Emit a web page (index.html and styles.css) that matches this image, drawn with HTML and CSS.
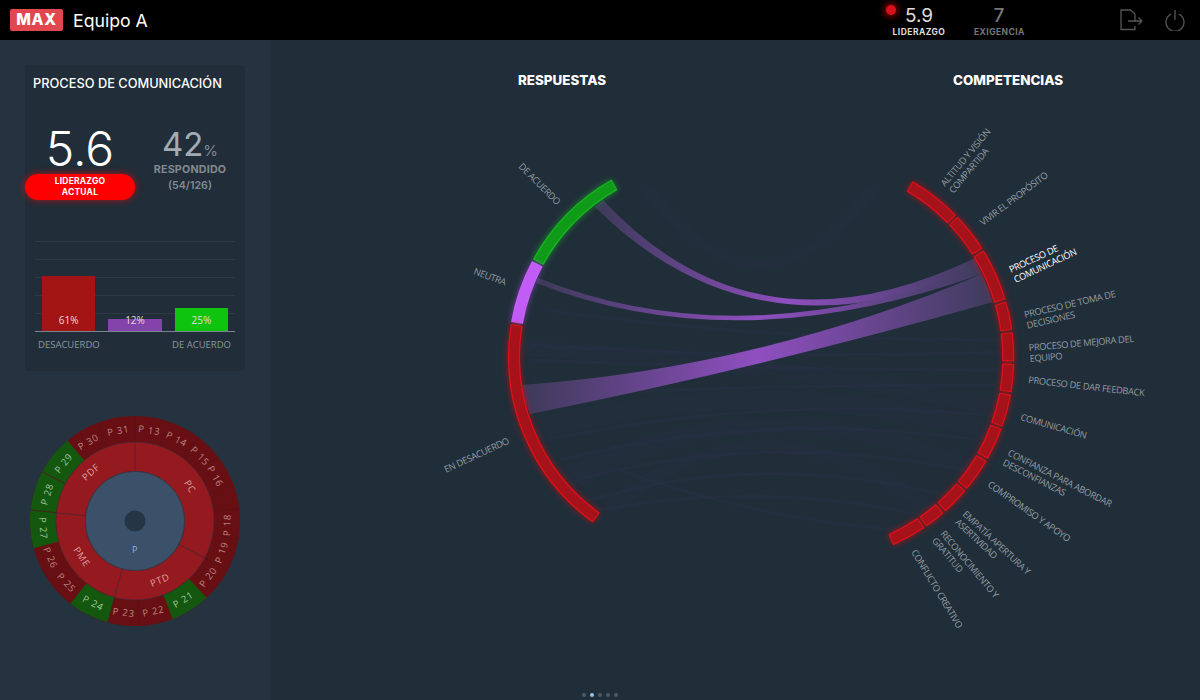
FILE: index.html
```html
<!DOCTYPE html>
<html lang="es">
<head>
<meta charset="utf-8">
<title>Equipo A</title>
<link rel="stylesheet" href="styles.css">
</head>
<body>
<header class="topbar">
  <div class="brand"><span class="logo">MAX</span><span class="team">Equipo A</span></div>
  <div class="metrics">
    <div class="metric metric-lead">
      <div class="metric-value"><span class="dot"></span>5.9</div>
      <div class="metric-label">LIDERAZGO</div>
    </div>
    <div class="metric metric-demand">
      <div class="metric-value">7</div>
      <div class="metric-label">EXIGENCIA</div>
    </div>
  </div>
  <div class="actions">
    <svg class="icon icon-export" width="24" height="22" viewBox="0 0 24 22"><path d="M15 13V5L10.5 1H1V20.5H15V17"/><path d="M8 12H22M18.5 8.5L22 12L18.5 15.5"/></svg>
    <svg class="icon icon-power" width="20" height="22" viewBox="0 0 20 22"><path d="M6 5.2A9 9 0 1 0 14 5.2"/><path d="M10 1V11"/></svg>
  </div>
</header>
<div class="page">
  <aside class="sidebar">
    <section class="card">
      <h2 class="card-title">PROCESO DE COMUNICACIÓN</h2>
      <div class="stats">
        <div class="stat-main">
          <div class="big">5.6</div>
          <div class="badge">LIDERAZGO<br>ACTUAL</div>
        </div>
        <div class="stat-side">
          <div class="pct">42<span class="pct-sign">%</span></div>
          <div class="side-label">RESPONDIDO</div>
          <div class="side-count">(54/126)</div>
        </div>
      </div>
      <div class="chart">
        <div class="col"><div class="bar bar-red"></div><span class="bar-value">61%</span></div>
        <div class="col"><div class="bar bar-purple"></div><span class="bar-value">12%</span></div>
        <div class="col"><div class="bar bar-green"></div><span class="bar-value">25%</span></div>
      </div>
      <div class="axis-labels"><span>DESACUERDO</span><span>DE ACUERDO</span></div>
    </section>
    <svg class="sunburst" width="210" height="210" viewBox="-105 -105 210 210">
      <circle r="92" class="ring-dark"/>
      <circle r="92" class="ring-green" pathLength="360" stroke-dasharray="22 360" transform="rotate(47)"/>
      <circle r="92" class="ring-green" pathLength="360" stroke-dasharray="23 360" transform="rotate(105)"/>
      <circle r="92" class="ring-green" pathLength="360" stroke-dasharray="65 360" transform="rotate(165)"/>
      <circle r="64.5" class="ring-mid"/>
      <circle r="79" class="ring-edge"/>
      <circle r="49.5" class="disk"/>
      <circle r="10.5" class="hole"/>
      <g class="seams">
        <line y1="-79" y2="-105" transform="rotate(0)"/><line y1="-79" y2="-105" transform="rotate(18)"/><line y1="-79" y2="-105" transform="rotate(37)"/><line y1="-79" y2="-105" transform="rotate(52)"/><line y1="-79" y2="-105" transform="rotate(70)"/><line y1="-79" y2="-105" transform="rotate(83)"/><line y1="-79" y2="-105" transform="rotate(100)"/><line y1="-79" y2="-105" transform="rotate(118)"/><line y1="-79" y2="-105" transform="rotate(178)"/><line y1="-79" y2="-105" transform="rotate(195)"/><line y1="-79" y2="-105" transform="rotate(238)"/><line y1="-79" y2="-105" transform="rotate(276)"/><line y1="-79" y2="-105" transform="rotate(298)"/><line y1="-79" y2="-105" transform="rotate(339)"/>
      </g>
      <g class="seams-mid">
        <line y1="-49.5" y2="-79" transform="rotate(0)"/><line y1="-49.5" y2="-79" transform="rotate(118)"/><line y1="-49.5" y2="-79" transform="rotate(195)"/><line y1="-49.5" y2="-79" transform="rotate(276)"/>
      </g>
      <g class="sb-red">
        <text transform="rotate(9) translate(0 -92)">P 13</text>
        <text transform="rotate(27) translate(0 -92)">P 14</text>
        <text transform="rotate(45) translate(0 -92)">P 15</text>
        <text transform="rotate(61) translate(0 -92)">P 16</text>
        <text transform="rotate(92.5) translate(0 -92) rotate(180)">P 18</text>
        <text transform="rotate(110) translate(0 -92) rotate(180)">P 19</text>
        <text transform="rotate(127.5) translate(0 -92) rotate(180)">P 20</text>
        <text transform="rotate(168.5) translate(0 -92) rotate(180)">P 22</text>
        <text transform="rotate(187) translate(0 -92) rotate(180)">P 23</text>
        <text transform="rotate(228) translate(0 -92) rotate(180)">P 25</text>
        <text transform="rotate(246.5) translate(0 -92) rotate(180)">P 26</text>
        <text transform="rotate(329.5) translate(0 -92)">P 30</text>
        <text transform="rotate(349.5) translate(0 -92)">P 31</text>
      </g>
      <g class="sb-green">
        <text transform="rotate(148.5) translate(0 -92) rotate(180)">P 21</text>
        <text transform="rotate(207) translate(0 -92) rotate(180)">P 24</text>
        <text transform="rotate(265.5) translate(0 -92) rotate(180)">P 27</text>
        <text transform="rotate(287) translate(0 -92)">P 28</text>
        <text transform="rotate(309) translate(0 -92)">P 29</text>
      </g>
      <g class="sb-mid">
        <text transform="rotate(58) translate(0 -65)">PC</text>
        <text transform="rotate(157) translate(0 -64) rotate(180)">PTD</text>
        <text transform="rotate(236) translate(0 -64) rotate(180)">PME</text>
        <text transform="rotate(318) translate(0 -66)">PDF</text>
      </g>
      <text class="sb-core" y="28">P</text>
    </svg>
  </aside>
  <main class="main">
    <div class="titles"><h2 class="col-title">RESPUESTAS</h2><h2 class="col-title">COMPETENCIAS</h2></div>
    <svg class="chord" width="930" height="560" viewBox="270 120 930 560">
      <defs>
        <linearGradient id="rib">
          <stop offset="0" stop-color="#3c3a58"/>
          <stop offset="0.5" stop-color="#8f4fc0"/>
          <stop offset="1" stop-color="#3e3c5c"/>
        </linearGradient>
      </defs>
      <g class="faint">
        <path d="M530 420Q760 360 990 420L985 440Q760 380 540 440Z"/>
        <path d="M520 340Q760 350 1000 400L996 416Q760 366 522 356Z"/>
        <path d="M560 470Q760 370 975 460L965 475Q760 385 575 490Z"/>
        <path d="M600 505Q760 375 940 505L925 515Q760 390 615 515Z"/>
        <path d="M640 190Q760 350 880 190L868 184Q760 335 652 184Z"/>
      </g>
      <g class="hairs">
        <path d="M530 345Q760 360 998 352"/>
        <path d="M530 360Q760 370 998 370"/>
        <path d="M535 395Q760 385 995 385"/>
        <path d="M545 440Q760 395 990 415"/>
        <path d="M560 460Q760 410 980 440"/>
        <path d="M575 480Q760 430 965 470"/>
        <path d="M590 500Q760 450 945 495"/>
        <path d="M600 510Q760 480 920 515"/>
        <path d="M620 470Q760 520 900 530"/>
        <path d="M545 310Q760 340 995 340"/>
      </g>
      <path class="ribbon" d="M603 200Q755 364 975 258A192 192 0 0 1 979.1 268.6Q755 366 595 207Z"/>
      <path class="ribbon" d="M538 278Q738 358 979.1 268.6A192 192 0 0 1 981.9 274Q738 362 536 283Z"/>
      <path class="ribbon" d="M521 385Q760 368 981.9 274A192 192 0 0 1 992.9 302Q760 368 530 414A192 192 0 0 1 521 385Z"/>
      <g transform="translate(712 357)">
        <g class="glow-green">
          <circle r="198" class="seg-green-edge" pathLength="360" stroke-dasharray="31.9 360" transform="rotate(208.6)"/>
          <circle r="198" class="seg-green" pathLength="360" stroke-dasharray="31.3 360" transform="rotate(208.9)"/>
        </g>
        <g class="glow-purple">
          <circle r="198" class="seg-purple-edge" pathLength="360" stroke-dasharray="18.2 360" transform="rotate(189.9)"/>
          <circle r="198" class="seg-purple" pathLength="360" stroke-dasharray="17.6 360" transform="rotate(190.2)"/>
        </g>
        <g class="glow-red">
          <circle r="198" class="seg-red-edge" pathLength="360" stroke-dasharray="63.5 360" transform="rotate(125.8)"/>
          <circle r="198" class="seg-red" pathLength="360" stroke-dasharray="62.9 360" transform="rotate(126.1)"/>
        </g>
      </g>
      <g transform="translate(809.3 358.2)">
        <g class="glow-red">
          <circle r="199" class="seg-red-edge" pathLength="360" stroke-dasharray="15.4 360" transform="rotate(-59.7)"/>
          <circle r="199" class="seg-red-edge" pathLength="360" stroke-dasharray="11.2 360" transform="rotate(-43.6)"/>
          <circle r="199" class="seg-red-edge" pathLength="360" stroke-dasharray="15 360" transform="rotate(-31.7)"/>
          <circle r="199" class="seg-red-edge" pathLength="360" stroke-dasharray="8 360" transform="rotate(-16)"/>
          <circle r="199" class="seg-red-edge" pathLength="360" stroke-dasharray="8.2 360" transform="rotate(-7.3)"/>
          <circle r="199" class="seg-red-edge" pathLength="360" stroke-dasharray="8 360" transform="rotate(1.6)"/>
          <circle r="199" class="seg-red-edge" pathLength="360" stroke-dasharray="9.2 360" transform="rotate(10.3)"/>
          <circle r="199" class="seg-red-edge" pathLength="360" stroke-dasharray="9.2 360" transform="rotate(20.2)"/>
          <circle r="199" class="seg-red-edge" pathLength="360" stroke-dasharray="9.6 360" transform="rotate(30.1)"/>
          <circle r="199" class="seg-red-edge" pathLength="360" stroke-dasharray="8 360" transform="rotate(40.4)"/>
          <circle r="199" class="seg-red-edge" pathLength="360" stroke-dasharray="6.1 360" transform="rotate(49.1)"/>
          <circle r="199" class="seg-red-edge" pathLength="360" stroke-dasharray="9.9 360" transform="rotate(55.9)"/>
          <circle r="199" class="seg-red" pathLength="360" stroke-dasharray="14.8 360" transform="rotate(-59.4)"/>
          <circle r="199" class="seg-red" pathLength="360" stroke-dasharray="10.6 360" transform="rotate(-43.3)"/>
          <circle r="199" class="seg-red" pathLength="360" stroke-dasharray="14.4 360" transform="rotate(-31.4)"/>
          <circle r="199" class="seg-red" pathLength="360" stroke-dasharray="7.4 360" transform="rotate(-15.7)"/>
          <circle r="199" class="seg-red" pathLength="360" stroke-dasharray="7.6 360" transform="rotate(-7)"/>
          <circle r="199" class="seg-red" pathLength="360" stroke-dasharray="7.4 360" transform="rotate(1.9)"/>
          <circle r="199" class="seg-red" pathLength="360" stroke-dasharray="8.6 360" transform="rotate(10.6)"/>
          <circle r="199" class="seg-red" pathLength="360" stroke-dasharray="8.6 360" transform="rotate(20.5)"/>
          <circle r="199" class="seg-red" pathLength="360" stroke-dasharray="9 360" transform="rotate(30.4)"/>
          <circle r="199" class="seg-red" pathLength="360" stroke-dasharray="7.4 360" transform="rotate(40.7)"/>
          <circle r="199" class="seg-red" pathLength="360" stroke-dasharray="5.5 360" transform="rotate(49.4)"/>
          <circle r="199" class="seg-red" pathLength="360" stroke-dasharray="9.3 360" transform="rotate(56.2)"/>
        </g>
      </g>
      <g class="labels">
        <text transform="translate(518 167) rotate(45)">DE ACUERDO</text>
        <text transform="translate(473 274) rotate(20)">NEUTRA</text>
        <text transform="translate(446 473) rotate(-25)">EN DESACUERDO</text>
        <text transform="translate(945 187) rotate(-50)">ALTITUD Y VISIÓN<tspan x="0" dy="11">COMPARTIDA</tspan></text>
        <text transform="translate(983 226) rotate(-37)">VIVIR EL PROPÓSITO</text>
        <text class="label-active" transform="translate(1011 273) rotate(-25)">PROCESO DE<tspan x="0" dy="11">COMUNICACIÓN</tspan></text>
        <text transform="translate(1025 318) rotate(-13)">PROCESO DE TOMA DE<tspan x="0" dy="11">DECISIONES</tspan></text>
        <text transform="translate(1029 351) rotate(-5)">PROCESO DE MEJORA DEL<tspan x="0" dy="11">EQUIPO</tspan></text>
        <text transform="translate(1028 383) rotate(6.5)">PROCESO DE DAR FEEDBACK</text>
        <text transform="translate(1020 420) rotate(16)">COMUNICACIÓN</text>
        <text transform="translate(1007 455) rotate(27)">CONFIANZA PARA ABORDAR<tspan x="0" dy="11">DESCONFIANZAS</tspan></text>
        <text transform="translate(987 486) rotate(35)">COMPROMISO Y APOYO</text>
        <text transform="translate(962 515) rotate(43)">EMPATÍA APERTURA Y<tspan x="0" dy="11">ASERTIVIDAD</tspan></text>
        <text transform="translate(940 534) rotate(50)">RECONOCIMIENTO Y<tspan x="0" dy="11">GRATITUD</tspan></text>
        <text transform="translate(911 552) rotate(59)">CONFLICTO CREATIVO</text>
      </g>
    </svg>
    <div class="pager"><span class="pip"></span><span class="pip pip-on"></span><span class="pip"></span><span class="pip"></span><span class="pip"></span></div>
  </main>
</div>
</body>
</html>
```
FILE: styles.css
```css
* { box-sizing: border-box; }
html, body { margin: 0; height: 700px; overflow: hidden; }
body { background: #202e39; font-family: Inter, "Liberation Sans", sans-serif; color: #fff; }
h2 { margin: 0; }

.topbar { height: 40px; background: #000; display: flex; align-items: center; padding-left: 10px; }
.brand { display: flex; align-items: center; gap: 10px; width: 873px; }
.logo { width: 53px; height: 22px; background: #e0474f; border-radius: 2px; font-size: 15.5px; font-weight: 800; letter-spacing: .8px; line-height: 22px; text-align: center; }
.team { font-size: 17.7px; font-weight: 400; }
.metrics { display: flex; width: 237px; padding-top: 2px; }
.metric { text-align: center; }
.metric-lead { width: 72px; color: #ddd; }
.metric-demand { width: 50px; margin-left: 19px; color: #777; }
.metric-value { font-size: 19px; line-height: 20px; height: 21px; position: relative; }
.metric-label { font-size: 8.5px; font-weight: 700; line-height: 10px; letter-spacing: .45px; }
.metric-demand .metric-value { font-weight: 500; }
.dot { display: inline-block; width: 10px; height: 10px; border-radius: 50%; background: #d9101a; box-shadow: 0 0 6px 2px rgba(220, 0, 0, .6); position: absolute; left: 3px; top: -1px; }
.actions { display: flex; gap: 21px; align-items: center; }
.icon { fill: none; stroke: #555; stroke-width: 1.3; display: block; }

.page { display: flex; height: 660px; }
.sidebar { width: 270px; background: #25323f; padding: 25px 25px 0; flex: none; }
.card { width: 220px; height: 306px; background: #212d38; border-radius: 4px; padding: 11px 8px 0; }
.card-title { font-size: 12.8px; font-weight: 500; line-height: 16px; white-space: nowrap; }
.stats { display: flex; margin: 32px 0 0 -8px; height: 84px; }
.stat-main { width: 110px; flex: none; text-align: center; }
.big { font-size: 48px; font-weight: 300; line-height: 50px; }
.badge { margin-top: 0; height: 26px; background: #fe0000; border-radius: 13px; box-shadow: 0 0 6px 1px rgba(255, 0, 0, .5); font-size: 8.5px; font-weight: 700; line-height: 11px; padding-top: 2px; letter-spacing: .2px; }
.stat-side { width: 96px; flex: none; margin-left: 7px; text-align: center; color: #7f8b94; }
.pct { font-size: 33px; font-weight: 400; line-height: 40px; color: #a2abb2; }
.pct-sign { font-size: 15px; color: #7f8b94; }
.side-label { font-size: 10.7px; font-weight: 700; line-height: 12px; margin-top: -7px; letter-spacing: .2px; }
.side-count { font-size: 10.7px; font-weight: 600; line-height: 12px; margin-top: 4px; }
.chart { margin: 33px 0 0 2px; width: 200px; height: 91px; display: flex; align-items: flex-end; gap: 13px; padding: 0 7px; border-bottom: 1px solid #7a858d; background: repeating-linear-gradient(to bottom, #2c3a46 0, #2c3a46 1px, transparent 1px, transparent 18px); }
.col { flex: 1; position: relative; }
.bar-red { height: 55px; background: #a31414; }
.bar-purple { height: 12px; background: #8343ab; }
.bar-green { height: 23px; background: #0fc40f; }
.bar-value { position: absolute; left: 0; right: 0; bottom: 5px; text-align: center; font-family: "Open Sans", sans-serif; font-size: 10px; line-height: 12px; color: #e6dada; }
.axis-labels { display: flex; justify-content: space-between; margin: 6px 6px 0 5px; width: 193px; font-family: "Open Sans", sans-serif; font-size: 9.5px; line-height: 14px; color: #8d979e; }
.sunburst { display: block; margin: 45px 0 0 5px; }
.ring-dark { fill: none; stroke: #680f13; stroke-width: 26; }
.ring-green { fill: none; stroke: #14570f; stroke-width: 26; }
.ring-mid { fill: none; stroke: #951a20; stroke-width: 29; }
.ring-edge { fill: none; stroke: #4a2530; stroke-width: .7; }
.disk { fill: #3a5169; stroke: #4a2f3c; stroke-width: .7; }
.hole { fill: #253545; }
.seams line { stroke: #55121a; stroke-width: .7; }
.seams-mid line { stroke: #4a2530; stroke-width: .8; }
.sunburst text { font-family: "Open Sans", sans-serif; font-size: 9.5px; text-anchor: middle; dominant-baseline: central; letter-spacing: .8px; }
.sb-red text { fill: #b98484; }
.sb-green text { fill: #9fc79a; }
.sb-mid text { fill: #dba0a0; }
.sunburst .sb-core { fill: #93b4d2; font-size: 9px; }

.main { flex: 1; display: flex; flex-direction: column; }
.titles { height: 80px; padding: 32px 0 0 248px; display: flex; gap: 347px; }
.col-title { font-size: 13.4px; font-weight: 800; line-height: 16px; white-space: nowrap; }
.chord { display: block; flex: none; }
.ribbon { fill: url(#rib); }
.faint path { fill: #4a3a78; opacity: .07; }
.hairs path { fill: none; stroke: #54428c; stroke-width: 3; opacity: .07; }
.seg-red-edge, .seg-red, .seg-green-edge, .seg-green, .seg-purple-edge, .seg-purple { fill: none; }
.seg-red-edge { stroke: #e0101a; stroke-width: 12; }
.seg-red { stroke: #a5121a; stroke-width: 9.5; }
.seg-green-edge { stroke: #16b81f; stroke-width: 12; }
.seg-green { stroke: #0f9a17; stroke-width: 9.5; }
.seg-purple-edge { stroke: #c85ffa; stroke-width: 12; }
.seg-purple { stroke: #c25cf7; stroke-width: 9.5; }
.glow-red { filter: drop-shadow(0 0 3px rgba(255, 0, 0, .6)); }
.glow-green { filter: drop-shadow(0 0 3px rgba(20, 220, 40, .5)); }
.glow-purple { filter: drop-shadow(0 0 3px rgba(190, 90, 250, .5)); }
.labels text { font-family: "Open Sans", sans-serif; font-size: 9.3px; letter-spacing: -.35px; fill: #939ca3; }
.labels .label-active { fill: #fff; }
.pager { height: 20px; padding: 13px 0 0 312px; display: flex; gap: 4px; }
.pip { width: 4px; height: 4px; border-radius: 50%; background: #4a5a68; }
.pip-on { background: #9cc4e4; }
```
